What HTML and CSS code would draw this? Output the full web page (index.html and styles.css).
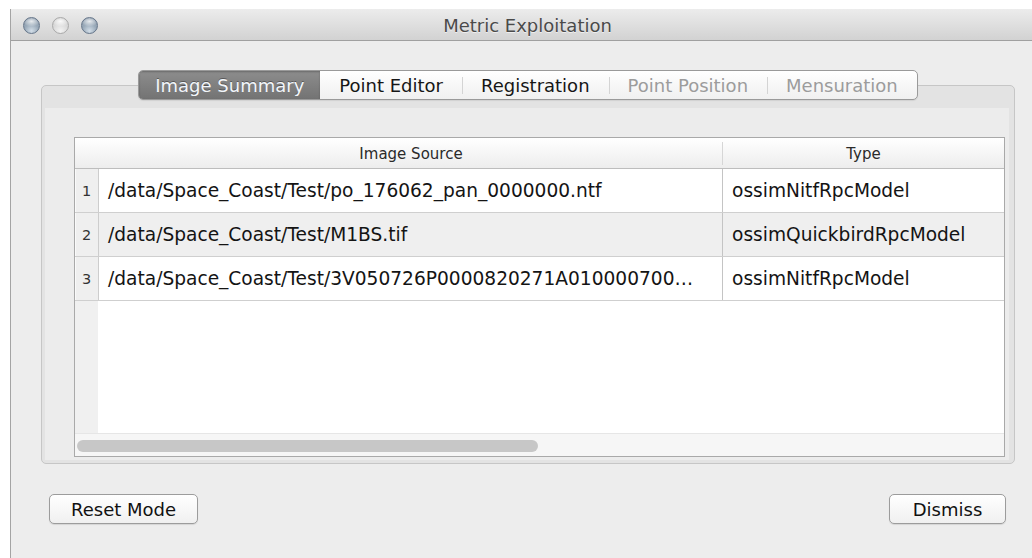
FILE: index.html
```html
<!DOCTYPE html>
<html lang="en">
<head>
<meta charset="utf-8">
<title>Metric Exploitation</title>
<link rel="stylesheet" href="styles.css">
</head>
<body>
<div class="window">
  <div class="titlebar">
    <div class="lights">
      <span class="light"></span>
      <span class="light off"></span>
      <span class="light"></span>
    </div>
    <div class="title">Metric Exploitation</div>
  </div>

  <div class="content">
    <div class="tabs">
      <div class="tab selected">Image Summary</div>
      <div class="tab">Point Editor</div>
      <div class="tab">Registration</div>
      <div class="tab disabled">Point Position</div>
      <div class="tab disabled">Mensuration</div>
    </div>

    <div class="groupbox">
      <div class="pane">
        <div class="table">
          <div class="thead">
            <div class="corner"></div>
            <div class="th th-src">Image Source</div>
            <div class="th">Type</div>
          </div>
          <div class="row">
            <div class="rownum">1</div>
            <div class="cell cell-src">/data/Space_Coast/Test/po_176062_pan_0000000.ntf</div>
            <div class="cell">ossimNitfRpcModel</div>
          </div>
          <div class="row alt">
            <div class="rownum">2</div>
            <div class="cell cell-src">/data/Space_Coast/Test/M1BS.tif</div>
            <div class="cell">ossimQuickbirdRpcModel</div>
          </div>
          <div class="row">
            <div class="rownum">3</div>
            <div class="cell cell-src">/data/Space_Coast/Test/3V050726P0000820271A010000700…</div>
            <div class="cell">ossimNitfRpcModel</div>
          </div>
          <div class="filler">
            <div class="filler-num"></div>
            <div class="filler-body"></div>
          </div>
          <div class="hscroll">
            <div class="thumb"></div>
          </div>
        </div>
      </div>
    </div>

    <div class="buttons">
      <button class="btn">Reset Mode</button>
      <button class="btn">Dismiss</button>
    </div>
  </div>
</div>
</body>
</html>
```

FILE: styles.css
```css
html, body {
  margin: 0;
  padding: 0;
}

body {
  width: 1032px;
  height: 558px;
  overflow: hidden;
  background: #ffffff;
  font-family: "DejaVu Sans", "Lucida Grande", sans-serif;
  color: #1a1a1a;
}

/* window frame */
.window {
  margin: 9px 0 0 10px;
  width: 1034px;
  height: 560px;
  box-sizing: border-box;
  background: #ededed;
  border-left: 1px solid #a4a4a4;
}

.titlebar {
  height: 31px;
  border-bottom: 1px solid #a0a0a0;
  background: linear-gradient(#ececec, #d2d2d2);
  display: grid;
  grid-template-columns: 1fr auto 1fr;
  align-items: center;
}

.lights {
  display: flex;
  gap: 12px;
  padding-left: 12px;
  padding-top: 1px;
}

.light {
  width: 17px;
  height: 17px;
  box-sizing: border-box;
  border-radius: 50%;
  border: 1px solid #66768a;
  background:
    radial-gradient(ellipse 60% 35% at 50% 22%, rgba(255,255,255,0.8), rgba(255,255,255,0) 100%),
    radial-gradient(circle at 50% 85%, #d3dee8 0, #9cacbb 45%, #75879a 100%);
}

.light.off {
  border-color: #a9a9a9;
  background:
    radial-gradient(ellipse 60% 35% at 50% 22%, rgba(255,255,255,0.9), rgba(255,255,255,0) 100%),
    radial-gradient(circle at 50% 85%, #f2f2f2 0, #dadada 50%, #c4c4c4 100%);
}

.title {
  font-size: 18px;
  color: #4a4a4a;
  padding-top: 1px;
  text-shadow: 0 1px 0 rgba(255,255,255,0.6);
}

/* dialog body */
.content {
  padding: 29px 29px 0 30px;
}

.tabs {
  position: relative;
  z-index: 1;
  display: flex;
  width: max-content;
  height: 30px;
  box-sizing: border-box;
  margin: 0 auto -15px;
  border: 1px solid #9a9a9a;
  border-radius: 5px;
  overflow: hidden;
  background: linear-gradient(#ffffff, #f0f0f0);
  box-shadow: 0 1px 1px rgba(0,0,0,0.08);
}

.tab {
  position: relative;
  display: flex;
  align-items: center;
  padding: 1px 19px 0;
  font-size: 18px;
  color: #161616;
}

.tab + .tab::before {
  content: "";
  position: absolute;
  left: 0;
  top: 6px;
  bottom: 5px;
  width: 1px;
  background: #d4d4d4;
}

.selected + .tab::before {
  display: none;
}

.tab.selected {
  padding: 1px 16px 0;
  background: linear-gradient(#8d8d8d, #737373);
  color: #f2f6fa;
  text-shadow: 0 -1px 0 rgba(0,0,0,0.35);
  box-shadow: inset 0 1px 2px rgba(0,0,0,0.25);
}

.tab.disabled {
  color: #9c9c9c;
}

.groupbox {
  height: 379px;
  box-sizing: border-box;
  border: 1px solid #c6c6c6;
  border-radius: 5px;
  background: #e3e3e3;
  padding: 22px 5px 3px 3px;
  display: flex;
  flex-direction: column;
}

.pane {
  flex: 1;
  display: flex;
  flex-direction: column;
  background: #ececec;
  padding: 29px 4px 3px 29px;
}

/* table view */
.table {
  flex: 1;
  display: flex;
  flex-direction: column;
  border: 1px solid #a9a9a9;
  background: #ffffff;
  overflow: hidden;
}

.thead,
.row {
  display: grid;
  grid-template-columns: 24px 624px 1fr;
}

.thead {
  height: 31px;
  box-sizing: border-box;
  border-bottom: 1px solid #bdbdbd;
  background: linear-gradient(#ffffff, #ededed);
}

.th {
  position: relative;
  display: flex;
  align-items: center;
  justify-content: center;
  padding-top: 2px;
  font-size: 15px;
  color: #2a2a2a;
}

.th-src::after {
  content: "";
  position: absolute;
  right: 0;
  top: 4px;
  bottom: 3px;
  width: 1px;
  background: #d6d6d6;
}

.row {
  height: 44px;
  box-sizing: border-box;
  border-bottom: 1px solid #cfcfcf;
}

.row.alt .cell {
  background: #efefef;
}

.rownum {
  display: flex;
  align-items: center;
  justify-content: center;
  box-sizing: border-box;
  border-right: 1px solid #cdcdcd;
  background: #efefef;
  box-shadow: inset 1px 0 0 #fafafa;
  font-size: 14.5px;
  color: #333333;
}

.cell {
  display: flex;
  align-items: center;
  padding-left: 9px;
  font-size: 18.6px;
  color: #141414;
  white-space: nowrap;
  overflow: hidden;
}

.cell-src {
  box-sizing: border-box;
  border-right: 1px solid #c4c4c4;
}

.filler {
  flex: 1;
  display: grid;
  grid-template-columns: 23px 1fr;
}

.filler-num {
  background: #f0f0f0;
}

.hscroll {
  height: 23px;
  box-sizing: border-box;
  border-top: 1px solid #e6e6e6;
  background: #f6f6f6;
  padding: 6px 0 0 2px;
}

.thumb {
  width: 461px;
  height: 12px;
  border-radius: 6px;
  background: #c7c7c7;
}

/* push buttons */
.buttons {
  display: flex;
  justify-content: space-between;
  margin-top: 30px;
  padding: 0 9px 0 8px;
}

.btn {
  height: 30px;
  min-width: 117px;
  padding: 0 21px;
  border: 1px solid #9c9c9c;
  border-radius: 5px;
  background: linear-gradient(#ffffff, #f0f0f0);
  box-shadow: 0 1px 1px rgba(0,0,0,0.1);
  font-family: "DejaVu Sans", "Lucida Grande", sans-serif;
  font-size: 18px;
  color: #111111;
}
```
